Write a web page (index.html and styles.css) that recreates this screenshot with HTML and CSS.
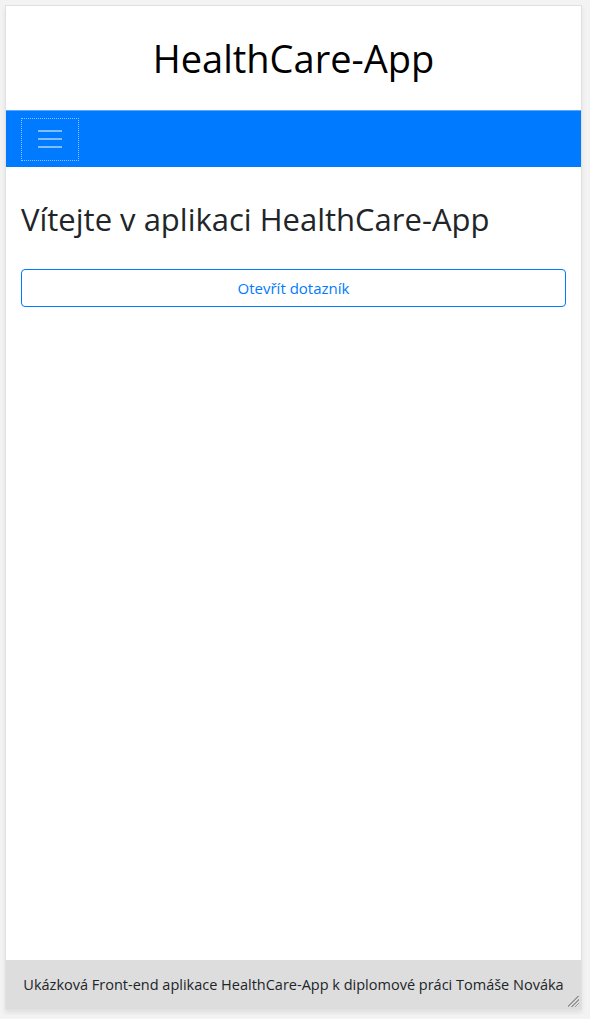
FILE: index.html
```html
<!DOCTYPE html>
<html lang="cs">
<head>
<meta charset="utf-8">
<title>HealthCare-App</title>
<link rel="stylesheet" href="styles.css">
</head>
<body>
<div class="frame">
  <header class="app-header">
    <h1 class="app-title">HealthCare-App</h1>
  </header>
  <nav class="navbar">
    <button class="navbar-toggler" type="button" aria-label="Menu">
      <svg class="toggler-icon" viewBox="0 0 30 30" width="30" height="30">
        <path d="M3 7h24M3 15h24M3 23h24" stroke="rgba(255,255,255,0.5)" stroke-width="2" stroke-linecap="butt" fill="none"/>
      </svg>
    </button>
  </nav>
  <main class="content">
    <h2 class="welcome">Vítejte v aplikaci HealthCare-App</h2>
    <button class="btn-outline" type="button">Otevřít dotazník</button>
  </main>
  <footer class="app-footer">
    <span>Ukázková Front-end aplikace HealthCare-App k diplomové práci Tomáše Nováka</span>
    <span class="resize-handle"></span>
  </footer>
</div>
</body>
</html>
```
FILE: styles.css
```css
* { box-sizing: border-box; }
html, body { margin: 0; padding: 0; }
body {
  background: #f3f3f3;
  padding: 5px;
  font-family: "Open Sans", "Noto Sans", "Liberation Sans", sans-serif;
  color: #212529;
}
.frame {
  width: 577px;
  height: 1005px;
  border: 1px solid #e0e0e0;
  background: #fff;
  display: flex;
  flex-direction: column;
  box-shadow: 0 3px 5px rgba(0,0,0,0.08);
}
.app-header {
  height: 105px;
  flex: none;
  display: flex;
  align-items: center;
  justify-content: center;
  border-bottom: 1px solid #5aa8ff;
}
.app-title {
  margin: 0;
  font-weight: 400;
  font-size: 38px;
  color: #000;
  line-height: 1.2;
  padding-top: 2px;
}
.navbar {
  height: 56px;
  flex: none;
  background: #007bff;
  padding: 8px 16px;
  display: flex;
  align-items: center;
}
.navbar-toggler {
  width: 56px;
  height: 41px;
  padding: 4px 12px;
  background: transparent;
  border: 1px solid transparent;
  border-radius: 0;
  outline: 1px dotted rgba(255,255,255,0.55);
  outline-offset: 0;
  display: flex;
  align-items: center;
  justify-content: center;
}
.toggler-icon { display: block; }
.content {
  padding: 34px 15px 0;
  flex: 1;
}
.welcome {
  margin: 0 0 31px;
  font-size: 31px;
  font-weight: 400;
  line-height: 1.2;
  color: #212529;
}
.btn-outline {
  display: block;
  width: 100%;
  height: 38px;
  border: 1px solid #007bff;
  border-radius: 4px;
  background: #fff;
  color: #007bff;
  font-family: inherit;
  font-size: 15px;
  line-height: 1.5;
}
.app-footer {
  position: relative;
  height: 49px;
  flex: none;
  background: #dddddd;
  display: flex;
  align-items: center;
  justify-content: center;
  font-size: 14.5px;
  color: #212529;
}
.resize-handle {
  position: absolute;
  right: 2px;
  bottom: 2px;
  width: 11px;
  height: 11px;
  background: linear-gradient(135deg, transparent 0 45%, #999 45% 52%, transparent 52% 62%, #999 62% 69%, transparent 69% 79%, #999 79% 86%, transparent 86%);
}
```
